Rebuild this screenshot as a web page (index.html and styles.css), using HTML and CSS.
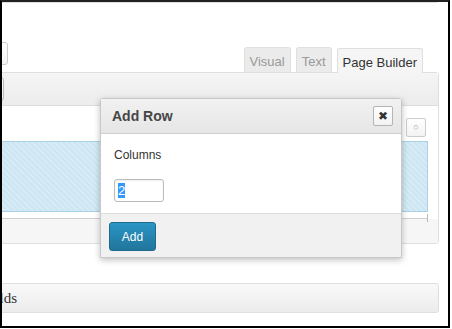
FILE: index.html
```html
<!DOCTYPE html>
<html lang="en">
<head>
  <meta charset="UTF-8">
  <title>Edit Page - Page Builder</title>
  <link rel="stylesheet" href="styles.css">
</head>
<body>
  <div class="frame">
    <div class="column">
      <!-- title box (cut off at top) -->
      <div class="title-box"></div>

      <!-- editor header: media button + tabs -->
      <div class="editor-head">
        <button class="media-btn" title="Add Media"></button>
        <div class="editor-tabs">
          <span class="tab">Visual</span>
          <span class="tab">Text</span>
          <span class="tab active">Page Builder</span>
        </div>
      </div>

      <!-- editor container -->
      <div class="editor">
        <div class="toolbar">
          <button class="tool-btn" title="Add Widget"></button>
        </div>
        <div class="builder">
          <div class="row-head">
            <span class="row-handle">&#9675;</span>
          </div>
          <div class="row-cells"></div>
          <div class="row-ruler"></div>
        </div>
        <div class="builder-foot"></div>
      </div>

      <!-- custom fields box -->
      <div class="postbox">
        <h3>Custom Fields</h3>
      </div>
    </div>

    <!-- add row dialog -->
    <div class="dialog">
      <div class="dialog-head">
        <span class="dialog-title">Add Row</span>
        <button class="dialog-close">&#10006;</button>
      </div>
      <div class="dialog-body">
        <label class="field-label" for="cols">Columns</label>
        <div class="field-input" id="cols"><span class="sel">2</span></div>
      </div>
      <div class="dialog-foot">
        <button class="add-btn">Add</button>
      </div>
    </div>
  </div>
</body>
</html>
```

FILE: styles.css
```css
* { box-sizing: border-box; margin: 0; padding: 0; }

body {
  font-family: 'Liberation Sans', Arial, sans-serif;
  background: #fff;
  color: #333;
}

.frame {
  position: relative;
  width: 450px;
  height: 328px;
  border: 2px solid #000;
  border-top-color: #222;
  background: #fff;
  overflow: hidden;
}

.column {
  margin-left: -80px;
  margin-right: 9px;
}

.title-box {
  height: 8px;
  margin-top: -7px;
  border: 1px solid #dfdfdf;
  border-radius: 3px;
}

.editor-head {
  display: flex;
  justify-content: space-between;
  align-items: flex-end;
  padding-right: 16px;
  margin-top: 39px;
}

.media-btn {
  width: 86px;
  height: 23px;
  margin-bottom: 7px;
  border: 1px solid #ccc;
  border-radius: 3px;
  background: linear-gradient(#fefefe, #f4f4f4);
}

.editor-tabs {
  display: flex;
  gap: 5px;
}

.tab {
  height: 25px;
  padding: 5px 5px 0;
  border: 1px solid #dfdfdf;
  border-bottom: none;
  border-radius: 3px 3px 0 0;
  background: #ebebeb;
  color: #999;
  font-size: 13px;
  line-height: 18px;
}

.tab.active {
  background: #f5f5f5;
  color: #333;
  position: relative;
  top: 1px;
}

.editor {
  border: 1px solid #dfdfdf;
  border-radius: 0 3px 3px 3px;
  background: #fff;
}

.toolbar {
  height: 33px;
  padding-top: 4px;
  background: linear-gradient(#f5f5f5, #ececec);
  border-bottom: 1px solid #dcdcdc;
}

.tool-btn {
  width: 81px;
  height: 24px;
  border: 1px solid #bbb;
  border-radius: 3px;
  background: linear-gradient(#fefefe, #f1f1f1);
}

.builder {
  padding: 12px 10px 0 0;
}

.row-head {
  display: flex;
  justify-content: flex-end;
  padding-right: 2px;
  margin-bottom: 4px;
}

.row-handle {
  width: 20px;
  height: 19px;
  border: 1px solid #ccc;
  border-radius: 2px;
  background: linear-gradient(#fff, #f3f3f3);
  color: #999;
  font-size: 9px;
  line-height: 17px;
  text-align: center;
}

.row-cells {
  height: 71px;
  border: 1px solid #a9d2e4;
  background: repeating-linear-gradient(45deg, #d5ebf5 0 2px, #cde6f1 2px 4px);
}

.row-ruler {
  position: relative;
  height: 7px;
  border-bottom: 1px solid #cfcfcf;
}

.row-ruler::after {
  content: "";
  position: absolute;
  right: 0;
  top: 2px;
  width: 1px;
  height: 8px;
  background: #bbb;
}

.builder-foot {
  height: 24px;
  background: #f6f6f6;
  border-radius: 0 0 3px 3px;
}

.postbox {
  margin-top: 39px;
  height: 30px;
  border: 1px solid #dfdfdf;
  border-radius: 3px;
  background: linear-gradient(#f9f9f9, #ececec);
}

.postbox h3 {
  padding: 5px 7px;
  font-family: 'Liberation Serif', 'Times New Roman', serif;
  font-size: 15px;
  font-weight: normal;
  line-height: 19px;
  color: #333;
}

/* dialog */
.dialog {
  position: absolute;
  left: 98px;
  top: 96px;
  width: 302px;
  height: 160px;
  border: 1px solid #c8c8c8;
  border-radius: 3px 3px 0 0;
  background: #fff;
  box-shadow: 0 2px 6px rgba(0,0,0,0.25);
  display: flex;
  flex-direction: column;
}

.dialog-head {
  height: 35px;
  display: flex;
  align-items: center;
  justify-content: space-between;
  padding: 0 8px 0 11px;
  background: linear-gradient(#f1f1f1, #e6e6e6);
  border-bottom: 1px solid #cfcfcf;
}

.dialog-title {
  font-size: 14px;
  font-weight: bold;
  color: #464646;
}

.dialog-close {
  width: 20px;
  height: 20px;
  border: 1px solid #b4b4b4;
  border-radius: 2px;
  background: linear-gradient(#fff, #f2f2f2);
  color: #333;
  font-size: 12px;
  line-height: 18px;
}

.dialog-body {
  height: 79px;
  padding: 14px 0 0 13px;
}

.field-label {
  display: block;
  font-size: 12px;
  color: #333;
}

.field-input {
  width: 50px;
  height: 23px;
  margin-top: 17px;
  padding: 3px 3px;
  border: 1px solid #bbb;
  border-radius: 3px;
  box-shadow: inset 0 1px 2px rgba(0,0,0,0.07);
  font-size: 13px;
  line-height: 15px;
}

.sel {
  background: #3399ff;
  color: #fff;
}

.dialog-foot {
  flex: 1;
  padding: 8px 0 0 8px;
  background: #f1f1f1;
  border-top: 1px solid #dcdcdc;
}

.add-btn {
  width: 47px;
  height: 29px;
  border: 1px solid #1e6a8d;
  border-radius: 3px;
  background: linear-gradient(#2a95c5, #21759b);
  color: #fff;
  font-family: 'Liberation Sans', Arial, sans-serif;
  font-size: 12px;
}
```
